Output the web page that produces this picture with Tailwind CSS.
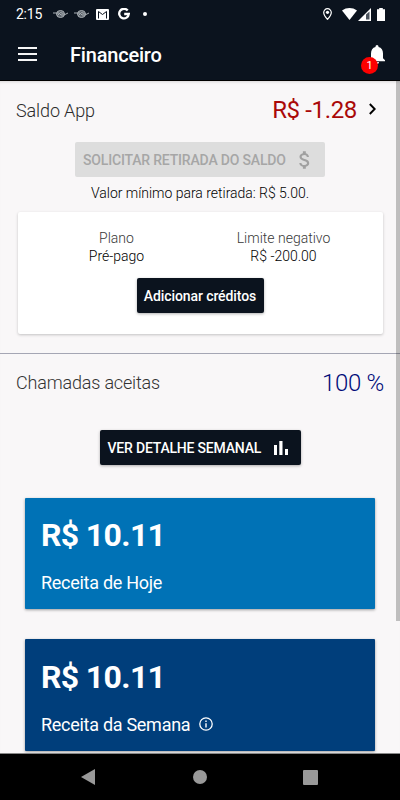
<!DOCTYPE html>
<html lang="pt-BR">
<head>
<meta charset="utf-8">
<meta name="viewport" content="width=device-width, initial-scale=1">
<title>Financeiro</title>
<script src="https://cdn.jsdelivr.net/npm/@tailwindcss/browser@4"></script>
</head>
<body class="w-[400px] h-[800px] overflow-hidden bg-[#f9f7f8] font-['Roboto',sans-serif] whitespace-nowrap">
<div class="flex flex-col h-[800px]">
  <header class="h-[81px] shrink-0 bg-[#0b131e] border-b border-black text-white flex flex-col">
    <div class="h-7 flex items-center pl-4 pr-[15px]">
      <span class="text-[14px] leading-7 w-[37px] tracking-[-0.25px]">2:15</span>
      <svg class="w-[15px] h-[10px] mr-[6px]" viewBox="0 0 15 10" fill="none" stroke="#aab0b5"><ellipse cx="7.5" cy="5" rx="4" ry="3.5" fill="#5d646c"/><path d="M0 4h6l2 2h3l4-2M4.500 6.500l3-3 3 1"/></svg>
      <svg class="w-[15px] h-[10px] mr-[7px]" viewBox="0 0 15 10" fill="none" stroke="#aab0b5"><ellipse cx="7.5" cy="5" rx="4" ry="3.5" fill="#5d646c"/><path d="M0 4h6l2 2h3l4-2M4.500 6.500l3-3 3 1"/></svg>
      <svg class="w-[13px] h-[11px] mr-[9px]" viewBox="0 0 13 11"><rect width="13" height="11" rx="1" fill="#fff"/><path d="M2.500 9.500V2.500L6.500 5.500l4-3V9.500" fill="none" stroke="#0b131e" stroke-width="1"/></svg>
      <svg class="w-3 h-3 mr-[13px]" viewBox="0 0 12 12" fill="none" stroke="#fff" stroke-width="2.3"><path d="M9.7 2.5A4.8 4.8 0 1 0 10.8 6H6.2"/></svg>
      <span class="size-1 rounded-full bg-white"></span>
      <span class="flex-1"></span>
      <svg class="w-[9px] h-3 mr-[10px]" viewBox="0 0 9 12"><path d="M4.5.7A3.8 3.8 0 0 0 .7 4.5C.7 7.3 4.5 11.3 4.5 11.3S8.3 7.3 8.3 4.5A3.8 3.8 0 0 0 4.5.7Z" fill="none" stroke="#fff" stroke-width="1.2"/><circle cx="4.5" cy="4.3" r="1.6" fill="#fff"/></svg>
      <svg class="w-[15px] h-3" viewBox="0 0 15 12"><path d="M0 2.5C4.5-.8 10.5-.8 15 2.5L7.5 12Z" fill="#fff"/></svg>
      <svg class="w-[13px] h-[13px] ml-[1px] mr-[6px]" viewBox="0 0 13 13"><path d="M13 0V13H0Z" fill="#fff"/><path d="M8 6.5 11.5 3.5V11.5H8Z" fill="#4b535d"/></svg>
      <svg class="w-2 h-[13px]" viewBox="0 0 8 13"><path d="M2.2 0h3.6v1.2H8V13H0V1.2h2.2Z" fill="#fff"/></svg>
    </div>
    <div class="h-[53px] flex items-center pl-[18px] pr-[14px]">
      <svg class="w-[19px] h-[14px]" viewBox="0 0 19 14" fill="#f5f5f5"><path d="M0 0h19v2H0zM0 6h19v2H0zM0 12h19v2H0z"/></svg>
      <h1 class="ml-[33px] mt-[2px] text-[20px] font-medium leading-6 tracking-[-0.2px]">Financeiro</h1>
      <span class="flex-1"></span>
      <div class="relative w-[18px] h-5 mt-[1px]">
        <svg class="w-[18px] h-5 mt-[-1px]" viewBox="0 0 18 20" fill="#fff"><path d="M9 1a1.500 1.500 0 0 1 1.500 1.500v.6C13.500 3.800 15 6.300 15 9.500v4.700l2 2v1H2v-1l1-2V9.500C3 6.300 4.500 3.800 7.500 3.100V2.500A1.500 1.500 0 0 1 9 1ZM7 18h4a2 2 0 0 1-4 0Z"/></svg>
        <span class="absolute left-[-7px] top-[12px] size-[17px] rounded-full bg-[#fd0000] text-[11px] leading-[17px] text-center">1</span>
      </div>
    </div>
  </header>

  <main class="relative h-[672px] shrink-0 overflow-hidden shadow-[inset_0_3px_3px_-2px_#00000022]">
    <section class="h-[273px] border-b border-[#a5a6b4] flex flex-col items-center">
      <div class="w-full h-[58px] pl-4 pr-[24px] flex items-center justify-between">
        <span class="text-[18px] font-light text-[#2c2c2c] tracking-[-0.12px]">Saldo App</span>
        <span class="flex items-center gap-[12px] text-[24px] text-[#aa0909] font-normal tracking-[-0.35px]">R$ -1.28
          <svg class="w-[7px] h-[12px] mt-[-2px]" viewBox="0 0 7 12" fill="none" stroke="#000" stroke-width="1.900"><path d="M.8 1 5.700 6 .8 11"/></svg>
        </span>
      </div>
      <button class="mt-[3px] w-[250px] h-[35px] rounded-[2px] bg-[#dddddd] text-[#a6a6a6] text-[14px] font-medium pl-2 flex items-center">
        <span class="tracking-[-0.18px] mt-[2px]">SOLICITAR RETIRADA DO SALDO</span>
        <svg class="ml-[13px] w-[11px] h-[18px]" viewBox="6 3 11.300 18" fill="#a0a0a0"><path d="M11.800 10.900c-2.270-.59-3-1.200-3-2.150 0-1.090 1.010-1.850 2.700-1.850 1.780 0 2.440.85 2.500 2.100h2.210c-.07-1.720-1.120-3.300-3.210-3.810V3h-3v2.160c-1.940.42-3.500 1.680-3.500 3.610 0 2.310 1.910 3.460 4.700 4.130 2.500.6 3 1.480 3 2.410 0 .69-.49 1.790-2.700 1.790-2.060 0-2.870-.92-2.980-2.100H6.320c.12 2.190 1.760 3.420 3.680 3.830V21h3v-2.150c1.950-.37 3.500-1.500 3.500-3.550 0-2.840-2.430-3.810-4.700-4.400z"/></svg>
      </button>
      <p class="mt-[6px] text-[14px] leading-5 font-light text-black tracking-[-0.02px]">Valor mínimo para retirada: R$ 5.00.</p>
      <div class="mt-[9px] w-[365px] h-[122px] bg-white rounded-[2px] shadow-[0_1px_3px_#00000038] flex flex-col items-center pt-[17px] text-center text-[14px] leading-[18px] font-light">
        <div class="flex w-[334px] text-black">
          <div class="flex-1"><p class="text-[#383838]">Plano</p><p>Pré-pago</p></div>
          <div class="flex-1"><p class="text-[#383838]">Limite negativo</p><p>R$ -200.00</p></div>
        </div>
        <button class="mt-[13px] w-[127px] h-[35px] rounded-[2px] bg-[#0b131e] text-white text-[14px] font-medium tracking-[-0.1px] shadow-[0_1px_3px_#00000050]">Adicionar créditos</button>
      </div>
    </section>
    <section class="flex flex-col items-center">
      <div class="w-full h-[58px] pl-4 pr-4 flex items-center justify-between">
        <span class="mt-[-2px] text-[18px] font-light text-[#333] tracking-[-0.18px]">Chamadas aceitas</span>
        <span class="text-[24px] font-light text-[#000b78] tracking-[-0.3px]">100 %</span>
      </div>
      <button class="mt-[18px] w-[201px] h-[35px] rounded-[2px] bg-[#0b131e] text-white text-[14px] font-medium shadow-[0_1px_3px_#00000050] flex items-center pl-2">
        <span class="tracking-[-0.2px] mt-[2px]">VER DETALHE SEMANAL</span>
        <svg class="ml-[13px] w-[14px] h-[14px]" viewBox="0 0 14 14" fill="#fff"><path d="M0 4h3v10H0zM5.300 0h3.200v14H5.300zM11 8h3v6h-3z"/></svg>
      </button>
      <article class="mt-[33px] w-[350px] h-[111px] bg-[#0072b6] rounded-[1px] shadow-[0_1px_3px_#00000060] text-white px-4 pt-[18px]">
        <p class="text-[32px] leading-[38px] font-bold tracking-[-0.65px]">R$ 10.11</p>
        <p class="mt-[18px] text-[18px] leading-[22px] tracking-[-0.28px]">Receita de Hoje</p>
      </article>
      <article class="mt-[30px] w-[350px] h-[112px] bg-[#003e7b] rounded-[1px] shadow-[0_1px_3px_#00000060] text-white px-4 pt-[19px]">
        <p class="text-[32px] leading-[38px] font-bold tracking-[-0.65px]">R$ 10.11</p>
        <p class="mt-[18px] text-[18px] leading-[22px] tracking-[-0.28px] flex items-center">Receita da Semana
          <svg class="ml-[9px] mt-[-3px] size-[14px]" viewBox="0 0 14 14"><circle cx="7" cy="7" r="6.200" fill="none" stroke="#fff" stroke-width="1.300"/><path d="M6.300 3.500h1.400v1.400H6.300zM6.300 6.200h1.400v4.300H6.300z" fill="#fff"/></svg></p>
      </article>
    </section>
    <div class="absolute right-0 top-0 w-1 h-[540px] bg-black/23"></div>
  </main>

  <nav class="h-[47px] shrink-0 bg-black border-t border-[#888] flex items-center pl-[81px]">
    <svg class="w-[14px] h-[16px]" viewBox="0 0 14 16" fill="#999"><path d="M14 0v16L0 8Z"/></svg>
    <span class="ml-[98px] size-[14px] rounded-full bg-[#999]"></span>
    <span class="ml-[96px] size-[15px] rounded-[1px] bg-[#999]"></span>
  </nav>
</div>
</body>
</html>
